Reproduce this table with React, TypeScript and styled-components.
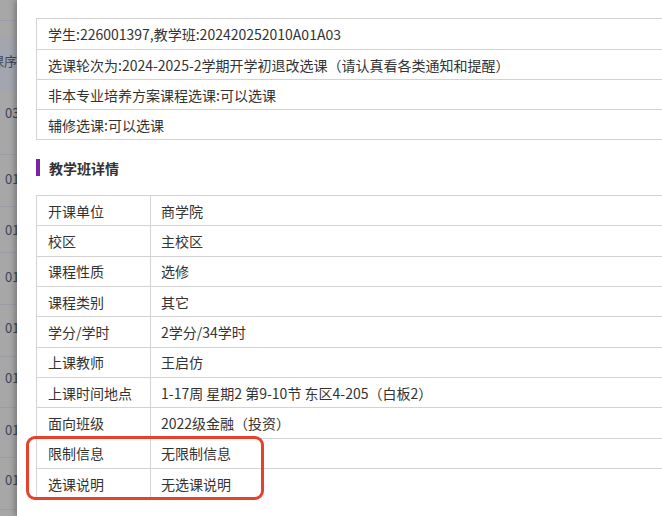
import React from 'react';
import styled, { createGlobalStyle } from 'styled-components';

const GlobalStyle = createGlobalStyle`
  html, body {
    margin: 0;
    padding: 0;
    overflow: hidden;
    background: #a7a7a7;
  }
  body {
    font-family: "Microsoft YaHei", "Noto Sans CJK SC", "Noto Sans", sans-serif;
  }
`;

const Page = styled.div`
  display: flex;
  width: 662px;
  height: 516px;
  overflow: hidden;
  background: #a7a7a7;
`;

/* the dimmed list page peeking out on the left */
const Backdrop = styled.div`
  flex: 0 0 17px;
  overflow: hidden;
  display: flex;
  flex-direction: column;
  padding-top: 20px;
  font-size: 13px;
  color: #3f4356;
`;

const TopRule = styled.div`
  height: 17px;
  box-sizing: border-box;
  border-top: 1px solid #9b99aa;
`;

const HeadBand = styled.div`
  height: 55px;
  background: #a3a6ae;
  display: flex;
  align-items: center;
  justify-content: flex-end;
  white-space: nowrap;
  padding-bottom: 8px;
  box-sizing: border-box;
`;

const BgRow = styled.div<{ $h: number; $top: number }>`
  height: ${p => p.$h}px;
  box-sizing: border-box;
  border-bottom: 1px solid #9d9ca6;
  padding: ${p => p.$top}px 0 0 5px;
  line-height: 18px;
  white-space: nowrap;
`;

const Modal = styled.div`
  flex: 0 0 760px;
  position: relative;
  z-index: 1;
  background: #fff;
  box-shadow: -2px 0 6px rgba(0, 0, 0, 0.3);
  padding: 18px 19px 0;
  box-sizing: border-box;
  color: #333;
  font-size: 14px;
`;

const InfoTable = styled.div`
  border: 1px solid #d3d3d3;
`;

const InfoRow = styled.div`
  height: 30px;
  box-sizing: border-box;
  display: flex;
  align-items: center;
  padding-left: 11px;
  white-space: nowrap;

  & + & {
    border-top: 1px solid #d3d3d3;
  }
`;

const SectionTitle = styled.h3`
  display: flex;
  align-items: center;
  gap: 9px;
  margin: 19px 0;
  height: 17px;
  font-size: 14px;
  font-weight: bold;
  color: #333;

  &::before {
    content: '';
    width: 4px;
    height: 17px;
    background: #7d22a6;
  }
`;

const DetailTable = styled.div`
  border-left: 1px solid #d3d3d3;
  border-right: 1px solid #d3d3d3;
`;

const DetailRow = styled.div`
  height: 30.33px;
  box-sizing: border-box;
  border-top: 1px solid #d3d3d3;
  display: grid;
  grid-template-columns: 114px 1fr;
  white-space: nowrap;
`;

const Cell = styled.div<{ $label?: boolean }>`
  display: flex;
  align-items: center;
  padding-left: ${p => (p.$label ? 11 : 10)}px;
  border-right: ${p => (p.$label ? '1px solid #d3d3d3' : 'none')};
`;

/* red annotation drawn around the last two rows */
const Flagged = styled.div`
  position: relative;

  &::after {
    content: '';
    position: absolute;
    top: -2px;
    bottom: -2px;
    left: -11px;
    width: 238px;
    box-sizing: border-box;
    border: 3px solid #e6412b;
    border-radius: 9px;
    pointer-events: none;
  }
`;

const bgRows = [
  { h: 63, top: 12, text: '0301' },
  { h: 52, top: 15, text: '0101' },
  { h: 46, top: 14, text: '0101' },
  { h: 52, top: 15, text: '0101' },
  { h: 52, top: 14, text: '0101' },
  { h: 51, top: 12, text: '0101' },
  { h: 50, top: 13, text: '0101' },
  { h: 52, top: 13, text: '0101' },
];

const infoLines = [
  '学生:226001397,教学班:202420252010A01A03',
  '选课轮次为:2024-2025-2学期开学初退改选课（请认真看各类通知和提醒）',
  '非本专业培养方案课程选课:可以选课',
  '辅修选课:可以选课',
];

const details = [
  ['开课单位', '商学院'],
  ['校区', '主校区'],
  ['课程性质', '选修'],
  ['课程类别', '其它'],
  ['学分/学时', '2学分/34学时'],
  ['上课教师', '王启仿'],
  ['上课时间地点', '1-17周 星期2 第9-10节 东区4-205（白板2）'],
  ['面向班级', '2022级金融（投资）'],
];

const flagged = [
  ['限制信息', '无限制信息'],
  ['选课说明', '无选课说明'],
];

const renderRow = ([label, value]: string[]) => (
  <DetailRow key={label}>
    <Cell $label>{label}</Cell>
    <Cell>{value}</Cell>
  </DetailRow>
);

const App: React.FC = () => {
  return (
    <Page>
      <GlobalStyle />
      <Backdrop>
        <TopRule />
        <HeadBand>课序</HeadBand>
        {bgRows.map((r, i) => (
          <BgRow key={i} $h={r.h} $top={r.top}>
            {r.text}
          </BgRow>
        ))}
      </Backdrop>

      <Modal>
        <InfoTable>
          {infoLines.map(line => (
            <InfoRow key={line}>{line}</InfoRow>
          ))}
        </InfoTable>

        <SectionTitle>教学班详情</SectionTitle>

        <DetailTable>
          {details.map(renderRow)}
          <Flagged>{flagged.map(renderRow)}</Flagged>
        </DetailTable>
      </Modal>
    </Page>
  );
};

export default App;
